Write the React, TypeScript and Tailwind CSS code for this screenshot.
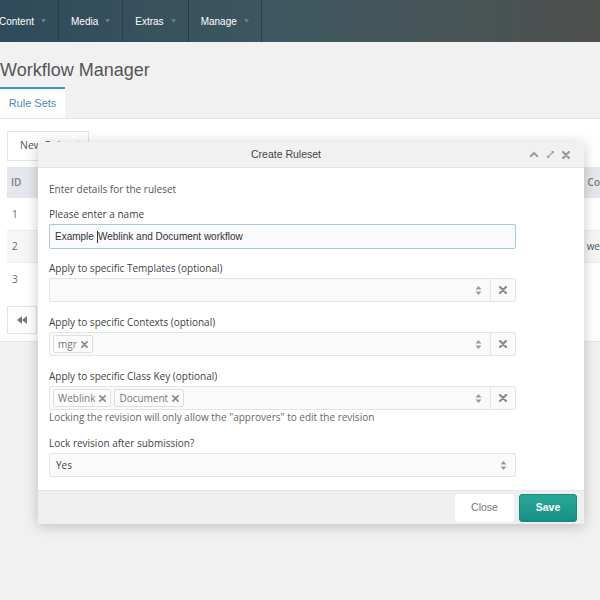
import React from "react";

const navItems = ["Content", "Media", "Extras", "Manage"];

function Caret() {
  return (
    <svg width="5" height="4" viewBox="0 0 6 4" className="shrink-0">
      <path d="M0 0h6L3 4z" fill="#6e8391" />
    </svg>
  );
}

function UpDown() {
  return (
    <svg width="7" height="11" viewBox="0 0 7 11">
      <path d="M0.5 4.5L3.5 1l3 3.5z" fill="#9a9a9a" />
      <path d="M0.5 6.5L3.5 10l3-3.5z" fill="#9a9a9a" />
    </svg>
  );
}

function Times({ size = 8, color = "#8a8a8a", w = 2.2 }: { size?: number; color?: string; w?: number }) {
  return (
    <svg width={size} height={size} viewBox="0 0 8 8">
      <path d="M1 1l6 6M7 1L1 7" stroke={color} strokeWidth={w} strokeLinecap="round" />
    </svg>
  );
}

function Tag({ label }: { label: string }) {
  return (
    <span className="flex items-center gap-[4px] h-[18px] px-[4px] border border-[#dedede] rounded-[2px] bg-[#fbfbfb] text-[10px] text-[#777] font-['Open_Sans',sans-serif]">
      {label}
      <Times size={7} color="#888" w={1.9} />
    </span>
  );
}

function MultiSelect({ tags = [] as string[] }) {
  return (
    <div className="flex h-[24px] w-[467px] border border-[#e4e4e4] rounded-[2px] bg-[#fafafa]">
      <div className="flex-1 flex items-center gap-[3px] pl-[3px]">
        {tags.map((t) => (
          <Tag key={t} label={t} />
        ))}
      </div>
      <div className="w-[24px] flex items-center justify-center">
        <UpDown />
      </div>
      <div className="w-[25px] border-l border-[#e4e4e4] flex items-center justify-center">
        <Times />
      </div>
    </div>
  );
}

function Label({ children, className = "" }: { children: React.ReactNode; className?: string }) {
  return <div className={`text-[10px] leading-[14px] text-[#3f3f3f] mb-[3px] ${className}`}>{children}</div>;
}

export default function App() {
  return (
    <div className="relative w-[600px] h-[600px] overflow-hidden bg-[#f1f1f1] font-['Liberation_Sans',Arial,sans-serif]">
      {/* top nav */}
      <nav className="h-[42px] flex bg-linear-to-r from-[#2f4a5a] via-[#3f5860] to-[#4e504d]">
        {navItems.map((item, i) => (
          <div
            key={item}
            className={`flex items-center gap-[7px] pl-[12px] pr-[12px] border-r border-[#283d48] text-[10px] text-white ${i === 0 ? "ml-[-13px]" : ""}`}
          >
            {item}
            <Caret />
          </div>
        ))}
      </nav>

      {/* page header */}
      <h1 className="mt-[17px] text-[18px] leading-[22px] text-[#555]">Workflow Manager</h1>
      <div className="mt-[6px] flex border-b border-[#e6e6e6]">
        <div className="w-[65px] h-[31px] border-t-2 border-[#3c96c9] bg-white flex items-center justify-center text-[11px] text-[#4f8ab5]">
          Rule Sets
        </div>
      </div>

      {/* panel with table */}
      <div className="bg-white pt-[12px] pb-[7px] border-b border-[#e6e6e6] font-['Open_Sans',sans-serif]">
        <button className="ml-[7px] w-[82px] h-[30px] border border-[#e4e4e4] bg-white text-[10.5px] text-[#555] text-left pl-[12px]">
          New Ruleset
        </button>
        <div className="ml-[7px] mt-[6px] text-[10px] text-[#666]">
          <div className="flex h-[31px] items-center bg-[#e4e7eb] font-semibold text-[#808080]">
            <div className="w-[578px] pl-[4px]">ID</div>
            <div className="pl-[5px]">Co</div>
          </div>
          <div className="flex h-[32px] items-center">
            <div className="w-[578px] pl-[5px]">1</div>
          </div>
          <div className="flex h-[33px] items-center bg-[#f6f6f6] border-y border-[#eeeeee]">
            <div className="w-[578px] pl-[5px]">2</div>
            <div className="pl-[5px] text-[#555]">we</div>
          </div>
          <div className="flex h-[33px] items-center">
            <div className="w-[578px] pl-[5px]">3</div>
          </div>
        </div>
        <button className="ml-[7px] mt-[10px] w-[30px] h-[28px] border border-[#e4e4e4] bg-white flex items-center justify-center">
          <svg width="10" height="8" viewBox="0 0 10 8">
            <path d="M5 0v8L0 4zM10 0v8L5 4z" fill="#777" />
          </svg>
        </button>
      </div>

      {/* modal */}
      <div className="absolute left-[38px] top-[142px] w-[546px] bg-white rounded-[3px] shadow-[0_2px_14px_rgba(0,0,0,0.22)]">
        <div className="h-[26px] flex items-center bg-[#f1f1f1] border-b border-[#e2e2e2] rounded-t-[3px]">
          <div className="flex-1 pl-[213px] text-[10.5px] text-[#444]">Create Ruleset</div>
          <div className="flex items-center gap-[7px] pr-[14px]">
            <svg width="10" height="7" viewBox="0 0 10 7">
              <path d="M1.2 5.8L5 2l3.8 3.8" stroke="#9a9a9a" strokeWidth="2" fill="none" />
            </svg>
            <svg width="9" height="9" viewBox="0 0 9 9">
              <path d="M1.5 7.5L7.5 1.5" stroke="#a5a5a5" strokeWidth="1.3" />
              <path d="M5 1h3v3zM1 5v3h3z" fill="#a5a5a5" />
            </svg>
            <Times size={8} color="#9a9a9a" w={2.2} />
          </div>
        </div>

        <div className="pl-[11px] pt-[14px] pb-[13px] font-['Open_Sans',sans-serif]">
          <div className="text-[10px] leading-[14px] text-[#555]">Enter details for the ruleset</div>

          <Label className="mt-[11px]">Please enter a name</Label>
          <div className="h-[25px] w-[467px] border border-[#a9c8db] rounded-[2px] bg-[#f8fafc] flex items-center pl-[5px] text-[10px] text-[#333] font-['Liberation_Sans',Arial,sans-serif]">
            Example <span className="inline-block w-px h-[12px] bg-[#333] ml-[3px]" />Weblink and Document workflow
          </div>

          <Label className="mt-[12px]">Apply to specific Templates (optional)</Label>
          <MultiSelect />

          <Label className="mt-[13px]">Apply to specific Contexts (optional)</Label>
          <MultiSelect tags={["mgr"]} />

          <Label className="mt-[13px]">Apply to specific Class Key (optional)</Label>
          <MultiSelect tags={["Weblink", "Document"]} />
          <div className="text-[10px] leading-[14px] text-[#666]">
            Locking the revision will only allow the "approvers" to edit the revision
          </div>

          <Label className="mt-[12px]">Lock revision after submission?</Label>
          <div className="h-[24px] w-[467px] border border-[#e4e4e4] rounded-[2px] bg-[#fafafa] flex items-center justify-between pl-[6px] pr-[8px] text-[10px] text-[#444]">
            Yes
            <UpDown />
          </div>
        </div>

        <div className="h-[34px] flex items-center justify-end gap-[5px] pr-[7px] bg-[#efefef] border-t border-[#e6e6e6] rounded-b-[3px]">
          <button className="w-[59px] h-[28px] bg-white rounded-[2px] text-[10.5px] text-[#777]">Close</button>
          <button className="w-[58px] h-[28px] rounded-[3px] border border-[#168a7e] bg-linear-to-b from-[#2aa898] to-[#139183] text-[10.5px] font-bold text-white">
            Save
          </button>
        </div>
      </div>
    </div>
  );
}
